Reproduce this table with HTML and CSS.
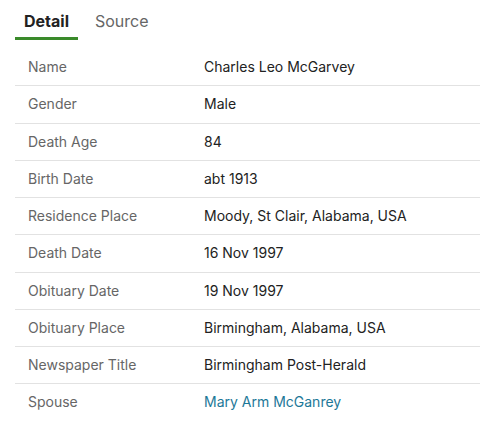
FILE: index.html
```html
<!DOCTYPE html>
<html>
<head>
<meta charset="utf-8">
<link rel="stylesheet" href="styles.css">
</head>
<body>
<div class="panel">
  <div class="tabs">
    <div class="tab active">Detail</div>
    <div class="tab">Source</div>
  </div>
  <table class="details">
    <tr><td class="label">Name</td><td class="value">Charles Leo McGarvey</td></tr>
    <tr><td class="label">Gender</td><td class="value">Male</td></tr>
    <tr><td class="label">Death Age</td><td class="value">84</td></tr>
    <tr><td class="label">Birth Date</td><td class="value">abt 1913</td></tr>
    <tr><td class="label">Residence Place</td><td class="value">Moody, St Clair, Alabama, USA</td></tr>
    <tr><td class="label">Death Date</td><td class="value">16 Nov 1997</td></tr>
    <tr><td class="label">Obituary Date</td><td class="value">19 Nov 1997</td></tr>
    <tr><td class="label">Obituary Place</td><td class="value">Birmingham, Alabama, USA</td></tr>
    <tr><td class="label">Newspaper Title</td><td class="value">Birmingham Post-Herald</td></tr>
    <tr class="last"><td class="label">Spouse</td><td class="value"><a class="link" href="#">Mary Arm McGanrey</a></td></tr>
  </table>
</div>
</body>
</html>
```

FILE: styles.css
```css
html, body {
  margin: 0;
  padding: 0;
  background: #fff;
}
body {
  font-family: Inter, "Liberation Sans", sans-serif;
  color: #222;
}
.panel {
  padding: 0 19px 0 15px;
}
.tabs {
  display: flex;
  gap: 8px;
  height: 40px;
}
.tab {
  font-size: 16px;
  line-height: 20px;
  padding: 11px 9px 6px 9px;
  color: #666;
}
.tab.active {
  color: #222;
  font-weight: 700;
  border-bottom: 3px solid #3a8a2a;
}
.details {
  width: 100%;
  border-collapse: collapse;
  margin-top: 9px;
}
.details td {
  font-size: 14px;
  line-height: 20.25px;
  padding: 8px 0 8px 0;
  border-bottom: 1px solid #e2e2e2;
  vertical-align: middle;
}
.details tr.last td {
  border-bottom: none;
}
.label {
  color: #666;
  width: 176px;
  padding-left: 13px !important;
}
.value {
  color: #222;
}
.link {
  color: #1d7898;
  text-decoration: none;
}
```
